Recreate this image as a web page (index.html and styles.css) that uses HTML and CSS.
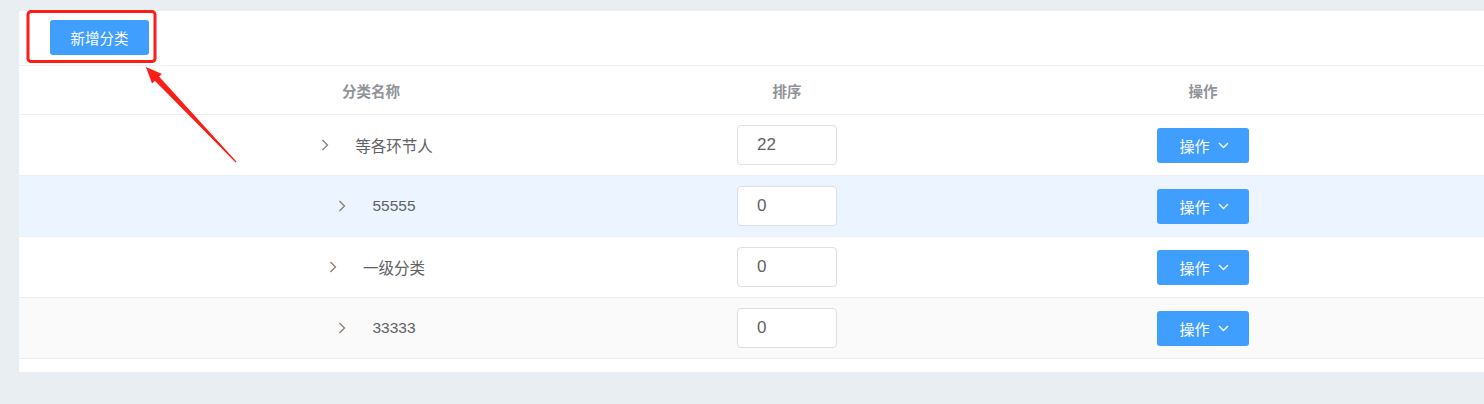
FILE: index.html
```html
<!DOCTYPE html>
<html lang="zh-CN">
<head>
    <meta charset="UTF-8">
    <title>分类管理</title>
    <link rel="stylesheet" href="styles.css">
</head>
<body>

    <div class="page">
        <div class="card">
            <!-- 工具栏 -->
            <div class="toolbar">
                <button class="btn-add">新增分类</button>
            </div>

            <!-- 分类表格 -->
            <div class="table">
                <div class="row head">
                    <div class="cell"></div>
                    <div class="cell">分类名称</div>
                    <div class="cell">排序</div>
                    <div class="cell">操作</div>
                    <div class="cell"></div>
                </div>

                <div class="row">
                    <div class="cell"></div>
                    <div class="cell name">
                        <span class="expand"><svg width="8" height="12" viewBox="0 0 8 12"><polyline points="1.5,1 6.5,6 1.5,11" fill="none" stroke="#8b7b73" stroke-width="1.3"/></svg></span>
                        <span>等各环节人</span>
                    </div>
                    <div class="cell"><input class="sort" type="text" value="22"></div>
                    <div class="cell">
                        <button class="btn-op">操作<svg width="11" height="7" viewBox="0 0 11 7"><polyline points="1,1 5.5,5.5 10,1" fill="none" stroke="#fff" stroke-width="1.3"/></svg></button>
                    </div>
                    <div class="cell"></div>
                </div>

                <div class="row hover">
                    <div class="cell"></div>
                    <div class="cell name">
                        <span class="expand"><svg width="8" height="12" viewBox="0 0 8 12"><polyline points="1.5,1 6.5,6 1.5,11" fill="none" stroke="#8b7b73" stroke-width="1.3"/></svg></span>
                        <span>55555</span>
                    </div>
                    <div class="cell"><input class="sort" type="text" value="0"></div>
                    <div class="cell">
                        <button class="btn-op">操作<svg width="11" height="7" viewBox="0 0 11 7"><polyline points="1,1 5.5,5.5 10,1" fill="none" stroke="#fff" stroke-width="1.3"/></svg></button>
                    </div>
                    <div class="cell"></div>
                </div>

                <div class="row">
                    <div class="cell"></div>
                    <div class="cell name">
                        <span class="expand"><svg width="8" height="12" viewBox="0 0 8 12"><polyline points="1.5,1 6.5,6 1.5,11" fill="none" stroke="#8b7b73" stroke-width="1.3"/></svg></span>
                        <span>一级分类</span>
                    </div>
                    <div class="cell"><input class="sort" type="text" value="0"></div>
                    <div class="cell">
                        <button class="btn-op">操作<svg width="11" height="7" viewBox="0 0 11 7"><polyline points="1,1 5.5,5.5 10,1" fill="none" stroke="#fff" stroke-width="1.3"/></svg></button>
                    </div>
                    <div class="cell"></div>
                </div>

                <div class="row striped">
                    <div class="cell"></div>
                    <div class="cell name">
                        <span class="expand"><svg width="8" height="12" viewBox="0 0 8 12"><polyline points="1.5,1 6.5,6 1.5,11" fill="none" stroke="#8b7b73" stroke-width="1.3"/></svg></span>
                        <span>33333</span>
                    </div>
                    <div class="cell"><input class="sort" type="text" value="0"></div>
                    <div class="cell">
                        <button class="btn-op">操作<svg width="11" height="7" viewBox="0 0 11 7"><polyline points="1,1 5.5,5.5 10,1" fill="none" stroke="#fff" stroke-width="1.3"/></svg></button>
                    </div>
                    <div class="cell"></div>
                </div>
            </div>
        </div>
    </div>

    <!-- 标注：红框和箭头 -->
    <svg class="mark" width="1484" height="404" viewBox="0 0 1484 404">
        <rect x="28" y="11.5" width="127" height="50" rx="3" fill="none" stroke="#fb1d16" stroke-width="3"/>
        <polygon points="146,67 162,74 159,76.5 236.4,161.6 235.6,162.4 154.8,80.7 152,83.4" fill="#fb1d16"/>
    </svg>

</body>
</html>
```

FILE: styles.css
```css
html, body {
    margin: 0;
    width: 1484px;
    height: 404px;
    overflow: hidden;
}

body {
    background-color: #e9eef3;
    font-family: "Liberation Sans", "Noto Sans CJK SC", sans-serif;
    font-size: 15px;
    color: #606266;
    position: relative;
}

.page {
    padding: 11px 0 0 19px;
}

.card {
    width: 1500px;
    background-color: #fff;
    padding-bottom: 13px;
}

.toolbar {
    padding: 9px 0 10px 31px;
    border-bottom: 1px solid #ebeef5;
}

.btn-add {
    display: block;
    width: 99px;
    height: 35px;
    background-color: #409eff;
    color: #fff;
    border: none;
    border-radius: 3px;
    font-family: inherit;
    font-size: 14.5px;
    padding: 0;
}

.row {
    display: grid;
    grid-template-columns: 144px 416px 416px 416px 1fr;
    height: 60px;
    border-bottom: 1px solid #ebeef5;
}

.row.head {
    height: 48px;
    color: #909399;
    font-weight: bold;
    font-size: 14.5px;
}

.row.hover {
    background-color: #ecf5ff;
}

.row.striped {
    background-color: #fafafa;
}

.cell {
    display: flex;
    align-items: center;
    justify-content: center;
}

.name {
    font-size: 15.5px;
    padding-left: 6px;
}

.expand {
    display: inline-flex;
    justify-content: center;
    width: 20px;
    margin-right: 20px;
}

.sort {
    box-sizing: border-box;
    width: 100px;
    height: 40px;
    border: 1px solid #dcdfe6;
    border-radius: 4px;
    padding: 0 0 0 19px;
    font-family: inherit;
    font-size: 17px;
    color: #606266;
    outline: none;
}

.btn-op {
    display: flex;
    align-items: center;
    justify-content: center;
    gap: 8px;
    width: 92px;
    height: 35px;
    background-color: #409eff;
    color: #fff;
    border: none;
    border-radius: 3px;
    font-family: inherit;
    font-size: 15px;
    padding: 0 0 0 2px;
}

.mark {
    position: absolute;
    left: 0;
    top: 0;
    pointer-events: none;
}
```
